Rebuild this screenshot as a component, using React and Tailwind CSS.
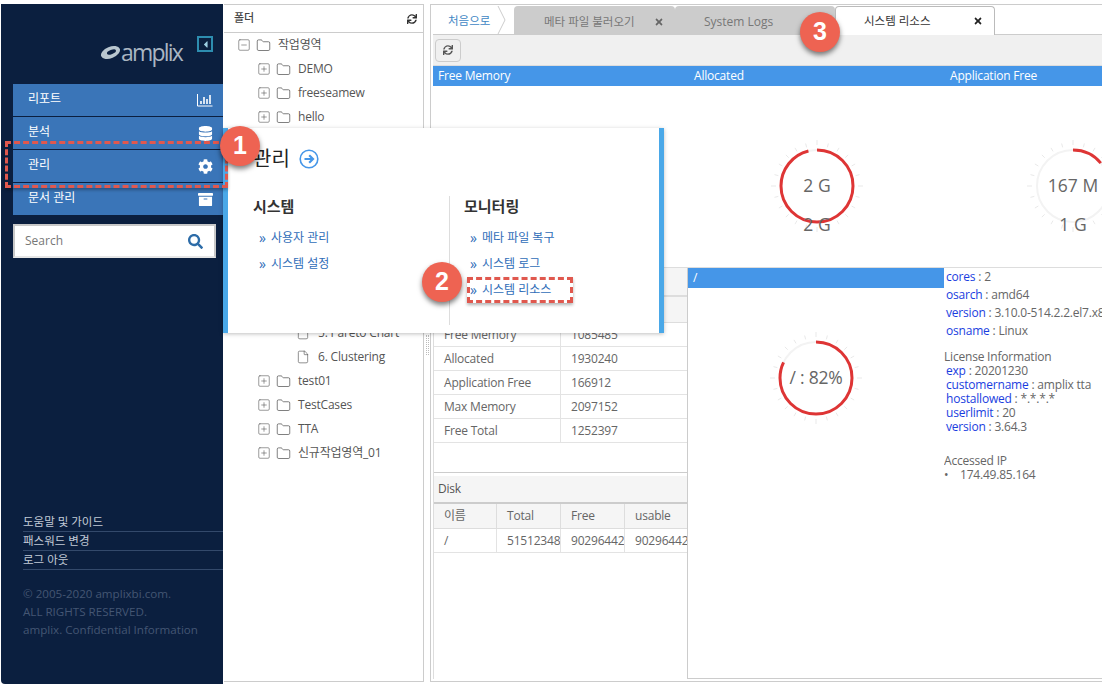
import { FaCog, FaDatabase, FaArchive, FaSearch, FaSync, FaTimes, FaCaretLeft } from "react-icons/fa";
import { Folder, File, SquarePlus, SquareMinus } from "lucide-react";

const menu = [
  { label: "리포트", icon: <BarIcon /> },
  { label: "분석", icon: <FaDatabase size={15} /> },
  { label: "관리", icon: <FaCog size={15} /> },
  { label: "문서 관리", icon: <FaArchive size={15} /> },
];

function BarIcon() {
  return (
    <svg width="16" height="14" viewBox="0 0 16 14" fill="none" stroke="currentColor">
      <path d="M.5 1v12h15" />
      <path d="M4 11V8M7 11V4M10 11V6M13 11V2" strokeWidth="1.6" />
    </svg>
  );
}

function TreeRow({ indent, label, open, file }) {
  return (
    <div className="flex h-6 items-center text-[12px] tracking-[-0.2px] text-[#555]" style={{ paddingLeft: indent }}>
      {file ? (
        <File size={14} strokeWidth={1} className="mr-[8px] text-[#444]" />
      ) : (
        <>
          {open ? (
            <SquareMinus size={14} strokeWidth={1} className="mr-[5px] text-[#555]" />
          ) : (
            <SquarePlus size={14} strokeWidth={1} className="mr-[5px] text-[#555]" />
          )}
          <Folder size={15} strokeWidth={1} className="mr-[7px] text-[#333]" />
        </>
      )}
      <span>{label}</span>
    </div>
  );
}

function Gauge({ percent, value, sub }) {
  const r = 36;
  const c = 2 * Math.PI * r;
  const ticks = [];
  for (let i = 0; i < 24; i++) {
    const a = (i * Math.PI) / 12;
    const long = i % 6 === 0;
    const r1 = long ? 41 : 40;
    const r2 = long ? 46 : 44;
    ticks.push(
      <line
        key={i}
        x1={50 + r1 * Math.sin(a)}
        y1={50 - r1 * Math.cos(a)}
        x2={50 + r2 * Math.sin(a)}
        y2={50 - r2 * Math.cos(a)}
        stroke="#e3e3e3"
        strokeWidth="0.8"
      />
    );
  }
  return (
    <svg width="100" height="100" viewBox="0 0 100 100" className="overflow-visible">
      {ticks}
      <circle cx="50" cy="50" r={r} fill="none" stroke="#f3f3f3" strokeWidth="2" />
      <circle
        cx="50"
        cy="50"
        r={r}
        fill="none"
        stroke="#de3535"
        strokeWidth="3"
        strokeDasharray={`${(c * percent) / 100} ${c}`}
        transform="rotate(-90 50 50)"
      />
      <text x="50" y="56" textAnchor="middle" fontSize="17.5" fill="#666">
        {value}
      </text>
      {sub && (
        <text x="50" y="95" textAnchor="middle" fontSize="17.5" fill="#666">
          {sub}
        </text>
      )}
    </svg>
  );
}

function Badge({ n, className }) {
  return (
    <div
      className={`absolute flex h-10 w-10 items-center justify-center rounded-full bg-[#ee6352] text-[25px] font-bold text-white shadow-[0_3px_5px_rgba(0,0,0,0.5)] ${className}`}
      style={{ fontFamily: '"Liberation Sans", sans-serif' }}
    >
      {n}
    </div>
  );
}

function Info({ k, v }) {
  return (
    <div>
      <span className="text-[#1a3ee0]">{k}</span> : {v}
    </div>
  );
}

function FlyLink({ label }) {
  return (
    <div className="flex h-[26px] items-center text-[12px] text-[#2f6db8]">
      <span className="mr-[5px] text-[14px] leading-none">»</span>
      {label}
    </div>
  );
}

export default function App() {
  return (
    <div
      className="relative flex h-[685px] w-[1102px] overflow-hidden bg-white pt-1"
      style={{ fontFamily: '"Open Sans", "Noto Sans CJK KR", sans-serif' }}
    >
      {/* sidebar */}
      <div className="ml-px flex h-[680px] w-[222px] shrink-0 flex-col rounded-bl bg-[#0b1f3f]">
        <div className="flex h-[80px] items-start justify-end pr-[10px] pt-[32px]">
          <div className="mr-[15px] mt-[2px] flex items-center">
            <svg width="21" height="17" viewBox="0 0 22 16">
              <ellipse cx="11" cy="8" rx="10.5" ry="6" fill="#b9c6cf" transform="rotate(-22 11 8)" />
              <ellipse cx="12" cy="7.5" rx="5" ry="2.2" fill="#0b1f3f" transform="rotate(-22 12 7.5)" />
            </svg>
            <span className="text-[23px] font-medium leading-7 tracking-[-1.8px] text-[#aab6c2]">amplix</span>
          </div>
          <div className="flex h-4 w-4 items-center justify-center border-2 border-[#2d8db0] text-[#9fd0e4]">
            <FaCaretLeft size={11} />
          </div>
        </div>
        <div className="ml-3 flex flex-col gap-px">
          {menu.map((m) => (
            <div
              key={m.label}
              className="flex h-[32px] items-center justify-between bg-[#3a75b8] pl-[15px] pr-[10px] text-[12px] text-white"
            >
              <span className="pb-[2px]">{m.label}</span>
              {m.icon}
            </div>
          ))}
        </div>
        <div className="ml-3 mt-[9px] flex h-[34px] w-[203px] items-center justify-between border-2 border-[#c8c8c8] border-b-[#e6e6e6] bg-white pl-[10px] pr-[11px] text-[12px] text-[#777]">
          <span>Search</span>
          <FaSearch size={15} className="text-[#2d6ca8]" />
        </div>
        <div className="ml-[22px] mt-[255px] text-[11.5px] text-[#c2cad6]">
          <div className="flex h-[19px] items-center border-b border-[#33496b]">도움말 및 가이드</div>
          <div className="flex h-[19px] items-center border-b border-[#33496b]">패스워드 변경</div>
          <div className="flex h-[19px] items-center border-b border-[#33496b]">로그 아웃</div>
          <div className="mt-[15px] text-[11.6px] leading-[18px] text-[#445673]">
            <div>© 2005-2020 amplixbi.com.</div>
            <div>ALL RIGHTS RESERVED.</div>
            <div>amplix. Confidential Information</div>
          </div>
        </div>
      </div>

      {/* folder tree */}
      <div className="ml-px h-[678px] w-[200px] shrink-0 border border-l-0 border-[#ccc]">
        <div className="flex h-[28px] items-center justify-between border-b border-[#ccc] pl-[10px] pr-[6px] text-[11px] font-medium text-[#444]">
          <span>폴더</span>
          <FaSync size={10} className="text-[#333]" />
        </div>
        <div>
          <TreeRow indent={13} label="작업영역" open />
          <TreeRow indent={33} label="DEMO" />
          <TreeRow indent={33} label="freeseamew" />
          <TreeRow indent={33} label="hello" />
          <div className="h-[192px]" />
          <div className="pl-[72px]">
            <TreeRow indent={0} label="5. Pareto Chart" file />
            <TreeRow indent={0} label="6. Clustering" file />
          </div>
          <TreeRow indent={33} label="test01" />
          <TreeRow indent={33} label="TestCases" />
          <TreeRow indent={33} label="TTA" />
          <TreeRow indent={33} label="신규작업영역_01" />
        </div>
      </div>

      {/* splitter */}
      <div className="flex w-[6px] shrink-0 items-center justify-center">
        <div className="h-5 w-[3px] border-x border-dotted border-[#bbb]" />
      </div>

      {/* main */}
      <div className="h-[678px] min-w-0 flex-1 overflow-hidden border-y border-l border-[#ccc] pl-[2px]">
        <div className="flex h-[30px] items-end border-b border-[#ccc] text-[12px]">
          <div className="flex h-[28px] w-[74px] items-center whitespace-nowrap pl-[15px] text-[11.5px] text-[#3f87c4]">
            <span className="pt-[2px]">처음으로</span>
            <svg width="10" height="28" viewBox="0 0 10 28" fill="none" stroke="#ccc" className="ml-[7px] shrink-0">
              <path d="M1 0l7 14-7 14" />
            </svg>
          </div>
          <div className="ml-[7px] flex h-[28px] w-[161px] items-center justify-between rounded-t bg-[#cccccc] pl-[30px] pr-[11px] pt-[3px] text-[#777]">
            <span className="text-[11.5px]">메타 파일 불러오기</span>
            <FaTimes size={10} className="text-[#666]" />
          </div>
          <div className="flex h-[28px] w-[160px] items-center rounded-t bg-[#cccccc] pl-[29px] pt-[3px] text-[#777]">System Logs</div>
          <div className="-mb-px flex h-[29px] w-[160px] items-center justify-between rounded-t border border-b-0 border-[#bbb] bg-white pl-[28px] pr-[11px] text-[#333]">
            <span className="text-[11.5px]">시스템 리소스</span>
            <FaTimes size={10} className="text-[#222]" />
          </div>
        </div>
        <div className="flex h-[30px] items-center bg-[#f0f0f0] pl-[2px]">
          <div className="flex h-[23px] w-[26px] items-center justify-center rounded-sm border border-[#ccc] text-[#555]">
            <FaSync size={10} />
          </div>
        </div>
        <div className="grid h-[21px] w-[768px] grid-cols-3 items-center border-t border-[#ddd] bg-[#4596e8] text-[12px] tracking-[-0.2px] text-white">
          <div className="pl-[5px]">Free Memory</div>
          <div className="pl-[5px]">Allocated</div>
          <div className="pl-[5px]">Application Free</div>
        </div>
        <div className="grid h-[182px] w-[768px] grid-cols-3 items-start border-b border-[#ddd] pt-[50px]">
          <div className="flex justify-center">
            <Gauge percent={50} value="1 G" sub="2 G" />
          </div>
          <div className="flex justify-center">
            <Gauge percent={96} value="2 G" sub="2 G" />
          </div>
          <div className="flex justify-center">
            <Gauge percent={14} value="167 M" sub="1 G" />
          </div>
        </div>

        <div className="flex text-[12px] tracking-[-0.2px] text-[#666]">
          {/* memory + disk tables */}
          <div className="h-[411px] w-[254px] shrink-0 border-l border-[#ddd]">
            <div className="h-[205px] border-b border-[#ccc]">
              <div className="h-[29px] border-b-2 border-[#ddd] bg-[#f5f5f5] pl-[5px]">Memory</div>
              <div className="grid h-[26px] grid-cols-[127px_1fr] border-b border-[#ddd] bg-[#f5f5f5]">
                <div className="border-r border-[#ddd] pl-[10px]">이름</div>
                <div className="pl-[10px]">값</div>
              </div>
              {[
                ["Free Memory", "1085485"],
                ["Allocated", "1930240"],
                ["Application Free", "166912"],
                ["Max Memory", "2097152"],
                ["Free Total", "1252397"],
              ].map((row) => (
                <div key={row[0]} className="grid h-6 grid-cols-[127px_1fr] items-center border-b border-[#e3e3e3]">
                  <div className="flex h-full items-center border-r border-[#e3e3e3] pl-[10px]">{row[0]}</div>
                  <div className="pl-[10px]">{row[1]}</div>
                </div>
              ))}
            </div>
            <div className="mt-[3px] flex h-[28px] items-center border-b-2 border-[#ccc] bg-[#f5f5f5] pl-[4px] font-medium text-[#555]">
              Disk
            </div>
            <div className="grid h-[25px] grid-cols-[63px_64px_64px_1fr] items-center border-b border-[#ddd] bg-[#f5f5f5]">
              <div className="flex h-full items-center border-r border-[#ddd] pl-[10px]">이름</div>
              <div className="flex h-full items-center border-r border-[#ddd] pl-[10px]">Total</div>
              <div className="flex h-full items-center border-r border-[#ddd] pl-[10px]">Free</div>
              <div className="pl-[10px]">usable</div>
            </div>
            <div className="grid h-6 grid-cols-[63px_64px_64px_1fr] items-center border-b border-[#e3e3e3]">
              <div className="flex h-full items-center border-r border-[#e3e3e3] pl-[10px]">/</div>
              <div className="flex h-full items-center overflow-hidden border-r border-[#e3e3e3] pl-[10px]">51512348</div>
              <div className="flex h-full items-center overflow-hidden border-r border-[#e3e3e3] pl-[10px]">90296442</div>
              <div className="overflow-hidden pl-[10px]">90296442</div>
            </div>
          </div>

          {/* disk gauge */}
          <div className="h-[411px] w-[257px] shrink-0 border-b border-l border-[#ccc]">
            <div className="flex h-[20px] items-center bg-[#4596e8] pl-[5px] text-white">/</div>
            <div className="flex justify-center pt-[40px]">
              <Gauge percent={82} value="/ : 82%" />
            </div>
          </div>

          {/* system info */}
          <div className="h-[411px] min-w-0 flex-1 overflow-hidden whitespace-nowrap border-b border-[#ccc] pl-[2px]">
            <div className="leading-[18px]">
              <Info k="cores" v="2" />
              <Info k="osarch" v="amd64" />
              <Info k="version" v="3.10.0-514.2.2.el7.x86_64" />
              <Info k="osname" v="Linux" />
            </div>
            <div className="mt-[10px] leading-[14px]">
              <div className="-ml-[2px]">License Information</div>
              <Info k="exp" v="20201230" />
              <Info k="customername" v="amplix tta" />
              <Info k="hostallowed" v="*.*.*.*" />
              <Info k="userlimit" v="20" />
              <Info k="version" v="3.64.3" />
            </div>
            <div className="-ml-[2px] mt-[20px] leading-[14px]">
              <div>Accessed IP</div>
              <div className="flex">
                <span className="w-[16px]">•</span>174.49.85.164
              </div>
            </div>
          </div>
        </div>
      </div>

      {/* flyout menu */}
      <div className="absolute left-[223px] top-[128px] h-[205px] w-[441px] border-x-[5px] border-[#4aa8e8] bg-white shadow-[0_1px_4px_rgba(0,0,0,0.25)]">
        <div className="ml-[25px] mt-[17px] flex items-center">
          <span className="text-[20px] leading-7 text-[#222]">관리</span>
          <svg width="20" height="20" viewBox="0 0 20 20" fill="none" className="ml-[9px]">
            <circle cx="10" cy="10" r="8.8" stroke="#4596e8" strokeWidth="1.6" />
            <path d="M5.5 10h8M10.2 6.2L14 10l-3.8 3.8" stroke="#4596e8" strokeWidth="2.2" />
          </svg>
        </div>
        <div className="mt-[23px] flex">
          <div className="ml-[25px] w-[196px]">
            <div className="text-[15px] font-bold leading-5 text-[#333]">시스템</div>
            <div className="ml-[6px] mt-[9px]">
              <FlyLink label="사용자 관리" />
              <FlyLink label="시스템 설정" />
            </div>
          </div>
          <div className="h-[129px] border-l border-[#ddd] pl-[14px]">
            <div className="text-[15px] font-bold leading-5 text-[#333]">모니터링</div>
            <div className="ml-[6px] mt-[9px]">
              <FlyLink label="메타 파일 복구" />
              <FlyLink label="시스템 로그" />
              <FlyLink label="시스템 리소스" />
            </div>
          </div>
        </div>
      </div>

      {/* callouts */}
      <div className="absolute left-[5px] top-[141px] h-[47px] w-[223px] border-[3px] border-dashed border-[#e0584e] shadow-[0_2px_3px_rgba(0,0,0,0.3)]" />
      <div className="absolute left-[467px] top-[277px] h-[26px] w-[106px] border-[3px] border-dashed border-[#e0584e] shadow-[0_2px_3px_rgba(0,0,0,0.3)]" />
      <Badge n="1" className="left-[220px] top-[126px]" />
      <Badge n="2" className="left-[422px] top-[262px]" />
      <Badge n="3" className="left-[800px] top-[12px]" />
    </div>
  );
}
